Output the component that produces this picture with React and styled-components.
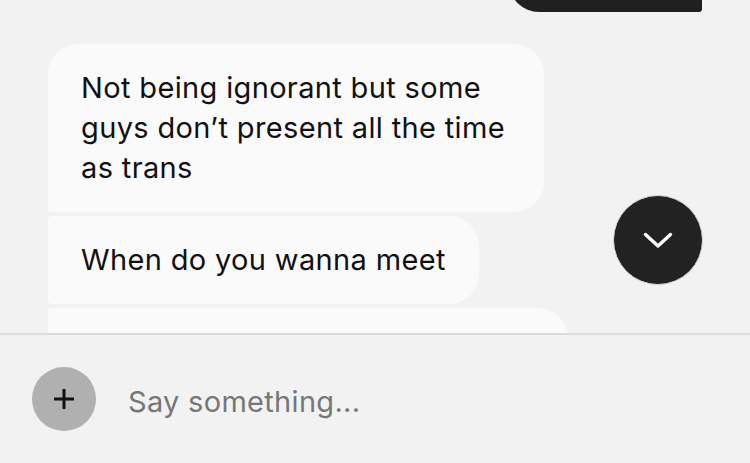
import React from "react";
import styled, { createGlobalStyle } from "styled-components";

const GlobalStyle = createGlobalStyle`
  html, body {
    margin: 0;
    padding: 0;
    background: #f2f2f2;
  }
  * {
    box-sizing: border-box;
  }
`;

const messages = [
  { id: 1, mine: true, text: "Sounds good" },
  {
    id: 2,
    text: "Not being ignorant but some guys don\u2019t present all the time as trans",
    first: true,
    max: 496,
  },
  { id: 3, text: "When do you wanna meet", max: 496 },
  { id: 4, text: "Maybe this weekend if you\u2019re around then", max: 520 },
];

export default function App() {
  return (
    <>
      <GlobalStyle />
      <Screen>
        <Conversation>
          <Thread>
            {messages.map((m) => (
              <Row key={m.id} $mine={m.mine}>
                <Bubble $mine={m.mine} $first={m.first} $max={m.max}>
                  {m.text}
                </Bubble>
              </Row>
            ))}
          </Thread>
          <JumpButton aria-label="Scroll to latest">
            <svg width="30" height="18" viewBox="0 0 30 18" fill="none">
              <path
                d="M2.5 2.5 L15 14 L27.5 2.5"
                stroke="#fff"
                strokeWidth="3.4"
                strokeLinecap="round"
                strokeLinejoin="round"
              />
            </svg>
          </JumpButton>
        </Conversation>
        <Composer>
          <AttachButton aria-label="Add">
            <svg width="22" height="22" viewBox="0 0 22 22" fill="none">
              <path
                d="M11 1 V21 M1 11 H21"
                stroke="#111"
                strokeWidth="3"
              />
            </svg>
          </AttachButton>
          <Input placeholder="Say something..." />
        </Composer>
      </Screen>
    </>
  );
}

const Screen = styled.div`
  width: 750px;
  height: 463px;
  display: flex;
  flex-direction: column;
  overflow: hidden;
  font-family: "Inter", "Lato", sans-serif;
  background: #f2f2f2;
`;

const Conversation = styled.div`
  position: relative;
  height: 335px;
  flex: none;
  overflow: hidden;
  border-bottom: 2px solid #dcdcdc;
`;

/* scrolled slightly: the last outgoing bubble peeks in at the top */
const Thread = styled.div`
  display: flex;
  flex-direction: column;
  gap: 4px;
  margin-top: -116px;
  padding: 0 48px;
`;

const Row = styled.div`
  display: flex;
  justify-content: ${(p) => (p.$mine ? "flex-end" : "flex-start")};
  margin-bottom: ${(p) => (p.$mine ? "28px" : "0")};
`;

const Bubble = styled.div`
  max-width: ${(p) => (p.$max ? `${p.$max}px` : "none")};
  padding: 24px 33px;
  font-size: 29px;
  line-height: 40px;
  letter-spacing: 0.35px;
  color: ${(p) => (p.$mine ? "#fff" : "#111")};
  background: ${(p) => (p.$mine ? "#202020" : "#fafafa")};
  border-radius: ${(p) =>
    p.$mine
      ? "30px 30px 3px 30px"
      : `${p.$first ? "30px" : "4px"} 30px 30px 4px`};
  width: ${(p) => (p.$mine ? "193px" : "auto")};
  height: ${(p) => (p.$mine ? "128px" : "auto")};
  overflow: hidden;
`;

const JumpButton = styled.button`
  position: absolute;
  left: 613px;
  top: 195px;
  width: 90px;
  height: 90px;
  border-radius: 50%;
  border: 1px solid #d6d6d6;
  background: #222;
  display: flex;
  align-items: center;
  justify-content: center;
  padding: 0;
  padding-top: 2px;
`;

const Composer = styled.div`
  flex: 1;
  display: flex;
  align-items: center;
  gap: 32px;
  padding: 0 32px;
`;

const AttachButton = styled.button`
  width: 64px;
  height: 64px;
  flex: none;
  border-radius: 50%;
  border: none;
  background: #b0b0b0;
  display: flex;
  align-items: center;
  justify-content: center;
  padding: 0;
`;

const Input = styled.input`
  flex: 1;
  border: none;
  outline: none;
  background: transparent;
  font-family: "Inter", "Lato", sans-serif;
  font-size: 29px;
  letter-spacing: 0.3px;
  color: #111;
  padding: 0;
  margin-top: 4px;

  &::placeholder {
    color: #777;
  }
`;
